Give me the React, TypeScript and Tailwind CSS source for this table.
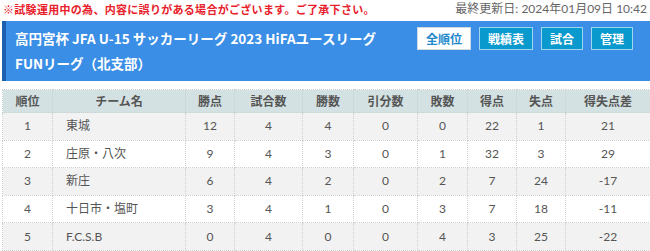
import React from 'react';

interface Standing {
  rank: number;
  team: string;
  points: number;
  played: number;
  won: number;
  drawn: number;
  lost: number;
  gf: number;
  ga: number;
  gd: number;
}

const standings: Standing[] = [
  { rank: 1, team: '東城', points: 12, played: 4, won: 4, drawn: 0, lost: 0, gf: 22, ga: 1, gd: 21 },
  { rank: 2, team: '庄原・八次', points: 9, played: 4, won: 3, drawn: 0, lost: 1, gf: 32, ga: 3, gd: 29 },
  { rank: 3, team: '新庄', points: 6, played: 4, won: 2, drawn: 0, lost: 2, gf: 7, ga: 24, gd: -17 },
  { rank: 4, team: '十日市・塩町', points: 3, played: 4, won: 1, drawn: 0, lost: 3, gf: 7, ga: 18, gd: -11 },
  { rank: 5, team: 'F.C.S.B', points: 0, played: 4, won: 0, drawn: 0, lost: 4, gf: 3, ga: 25, gd: -22 },
];

const headers = ['順位', 'チーム名', '勝点', '試合数', '勝数', '引分数', '敗数', '得点', '失点', '得失点差'];
const widths = ['w-[50px]', 'w-[133px]', 'w-[49px]', 'w-[68px]', 'w-[51px]', 'w-[64px]', 'w-[50px]', 'w-[49px]', 'w-[49px]', 'w-[85px]'];

const navButtons = ['戦績表', '試合', '管理'];

export default function App() {
  return (
    <div className="w-[650px] h-[251px] overflow-hidden bg-white font-['Lato','Noto_Sans_CJK_JP',sans-serif]">
      <div className="flex items-center justify-between h-[21px] pl-[3px] pr-[3px] pb-[3px]">
        <p className="whitespace-nowrap text-[11px] font-bold tracking-[0.3px] text-[#e8202a] font-['Noto_Sans_CJK_JP',sans-serif]">
          ※試験運用中の為、内容に誤りがある場合がございます。ご了承下さい。
        </p>
        <p className="whitespace-nowrap text-[12px] text-[#666]">最終更新日: 2024年01月09日 10:42</p>
      </div>

      <div className="ml-[2px] flex h-[60px] justify-between border-l-[4px] border-[#1b5fae] bg-[#3a8ee6] py-[5px] pl-[9px] pr-[17px]">
        <h1 className="whitespace-nowrap text-[13.5px] font-bold leading-[25px] text-white font-['Noto_Sans_CJK_JP',sans-serif]">
          高円宮杯 JFA U-15 サッカーリーグ 2023 HiFAユースリーグ
          <br />
          FUNリーグ（北支部）
        </h1>
        <div className="mt-[1px] flex shrink-0 gap-[8px]">
          <button className="h-[23px] w-[54px] border border-[#cfd8e0] bg-white text-[12px] font-bold text-[#1e88cc] font-['Noto_Sans_CJK_JP',sans-serif]">
            全順位
          </button>
          {navButtons.map((label) => (
            <button
              key={label}
              className={`h-[23px] ${label.length === 3 ? 'w-[54px]' : 'w-[42px]'} border border-[#9fd3ee] bg-[#0a99cc] text-[12px] font-bold text-white font-['Noto_Sans_CJK_JP',sans-serif]`}
            >
              {label}
            </button>
          ))}
        </div>
      </div>

      <table className="ml-[2px] mt-[8px] w-[648px] table-fixed border-collapse text-[12px] text-[#555]">
        <thead>
          <tr className="h-[23px] bg-[#d4e1e3]">
            {headers.map((h, i) => (
              <th
                key={h}
                className={`${widths[i]} border border-dotted border-[#c8d2d4] font-bold text-[#555] font-['Noto_Sans_CJK_JP',sans-serif]`}
              >
                {h}
              </th>
            ))}
          </tr>
        </thead>
        <tbody>
          {standings.map((s, idx) => (
            <tr key={s.rank} className={`h-[27.6px] ${idx % 2 === 0 ? 'bg-[#f2f2f2]' : 'bg-white'}`}>
              <td className="border border-dotted border-[#cfcfcf] text-center">{s.rank}</td>
              <td className="border border-dotted border-[#cfcfcf] pl-[13px] text-left">{s.team}</td>
              <td className="border border-dotted border-[#cfcfcf] text-center">{s.points}</td>
              <td className="border border-dotted border-[#cfcfcf] text-center">{s.played}</td>
              <td className="border border-dotted border-[#cfcfcf] text-center">{s.won}</td>
              <td className="border border-dotted border-[#cfcfcf] text-center">{s.drawn}</td>
              <td className="border border-dotted border-[#cfcfcf] text-center">{s.lost}</td>
              <td className="border border-dotted border-[#cfcfcf] text-center">{s.gf}</td>
              <td className="border border-dotted border-[#cfcfcf] text-center">{s.ga}</td>
              <td className="border border-dotted border-[#cfcfcf] text-center">{s.gd}</td>
            </tr>
          ))}
        </tbody>
      </table>
    </div>
  );
}
